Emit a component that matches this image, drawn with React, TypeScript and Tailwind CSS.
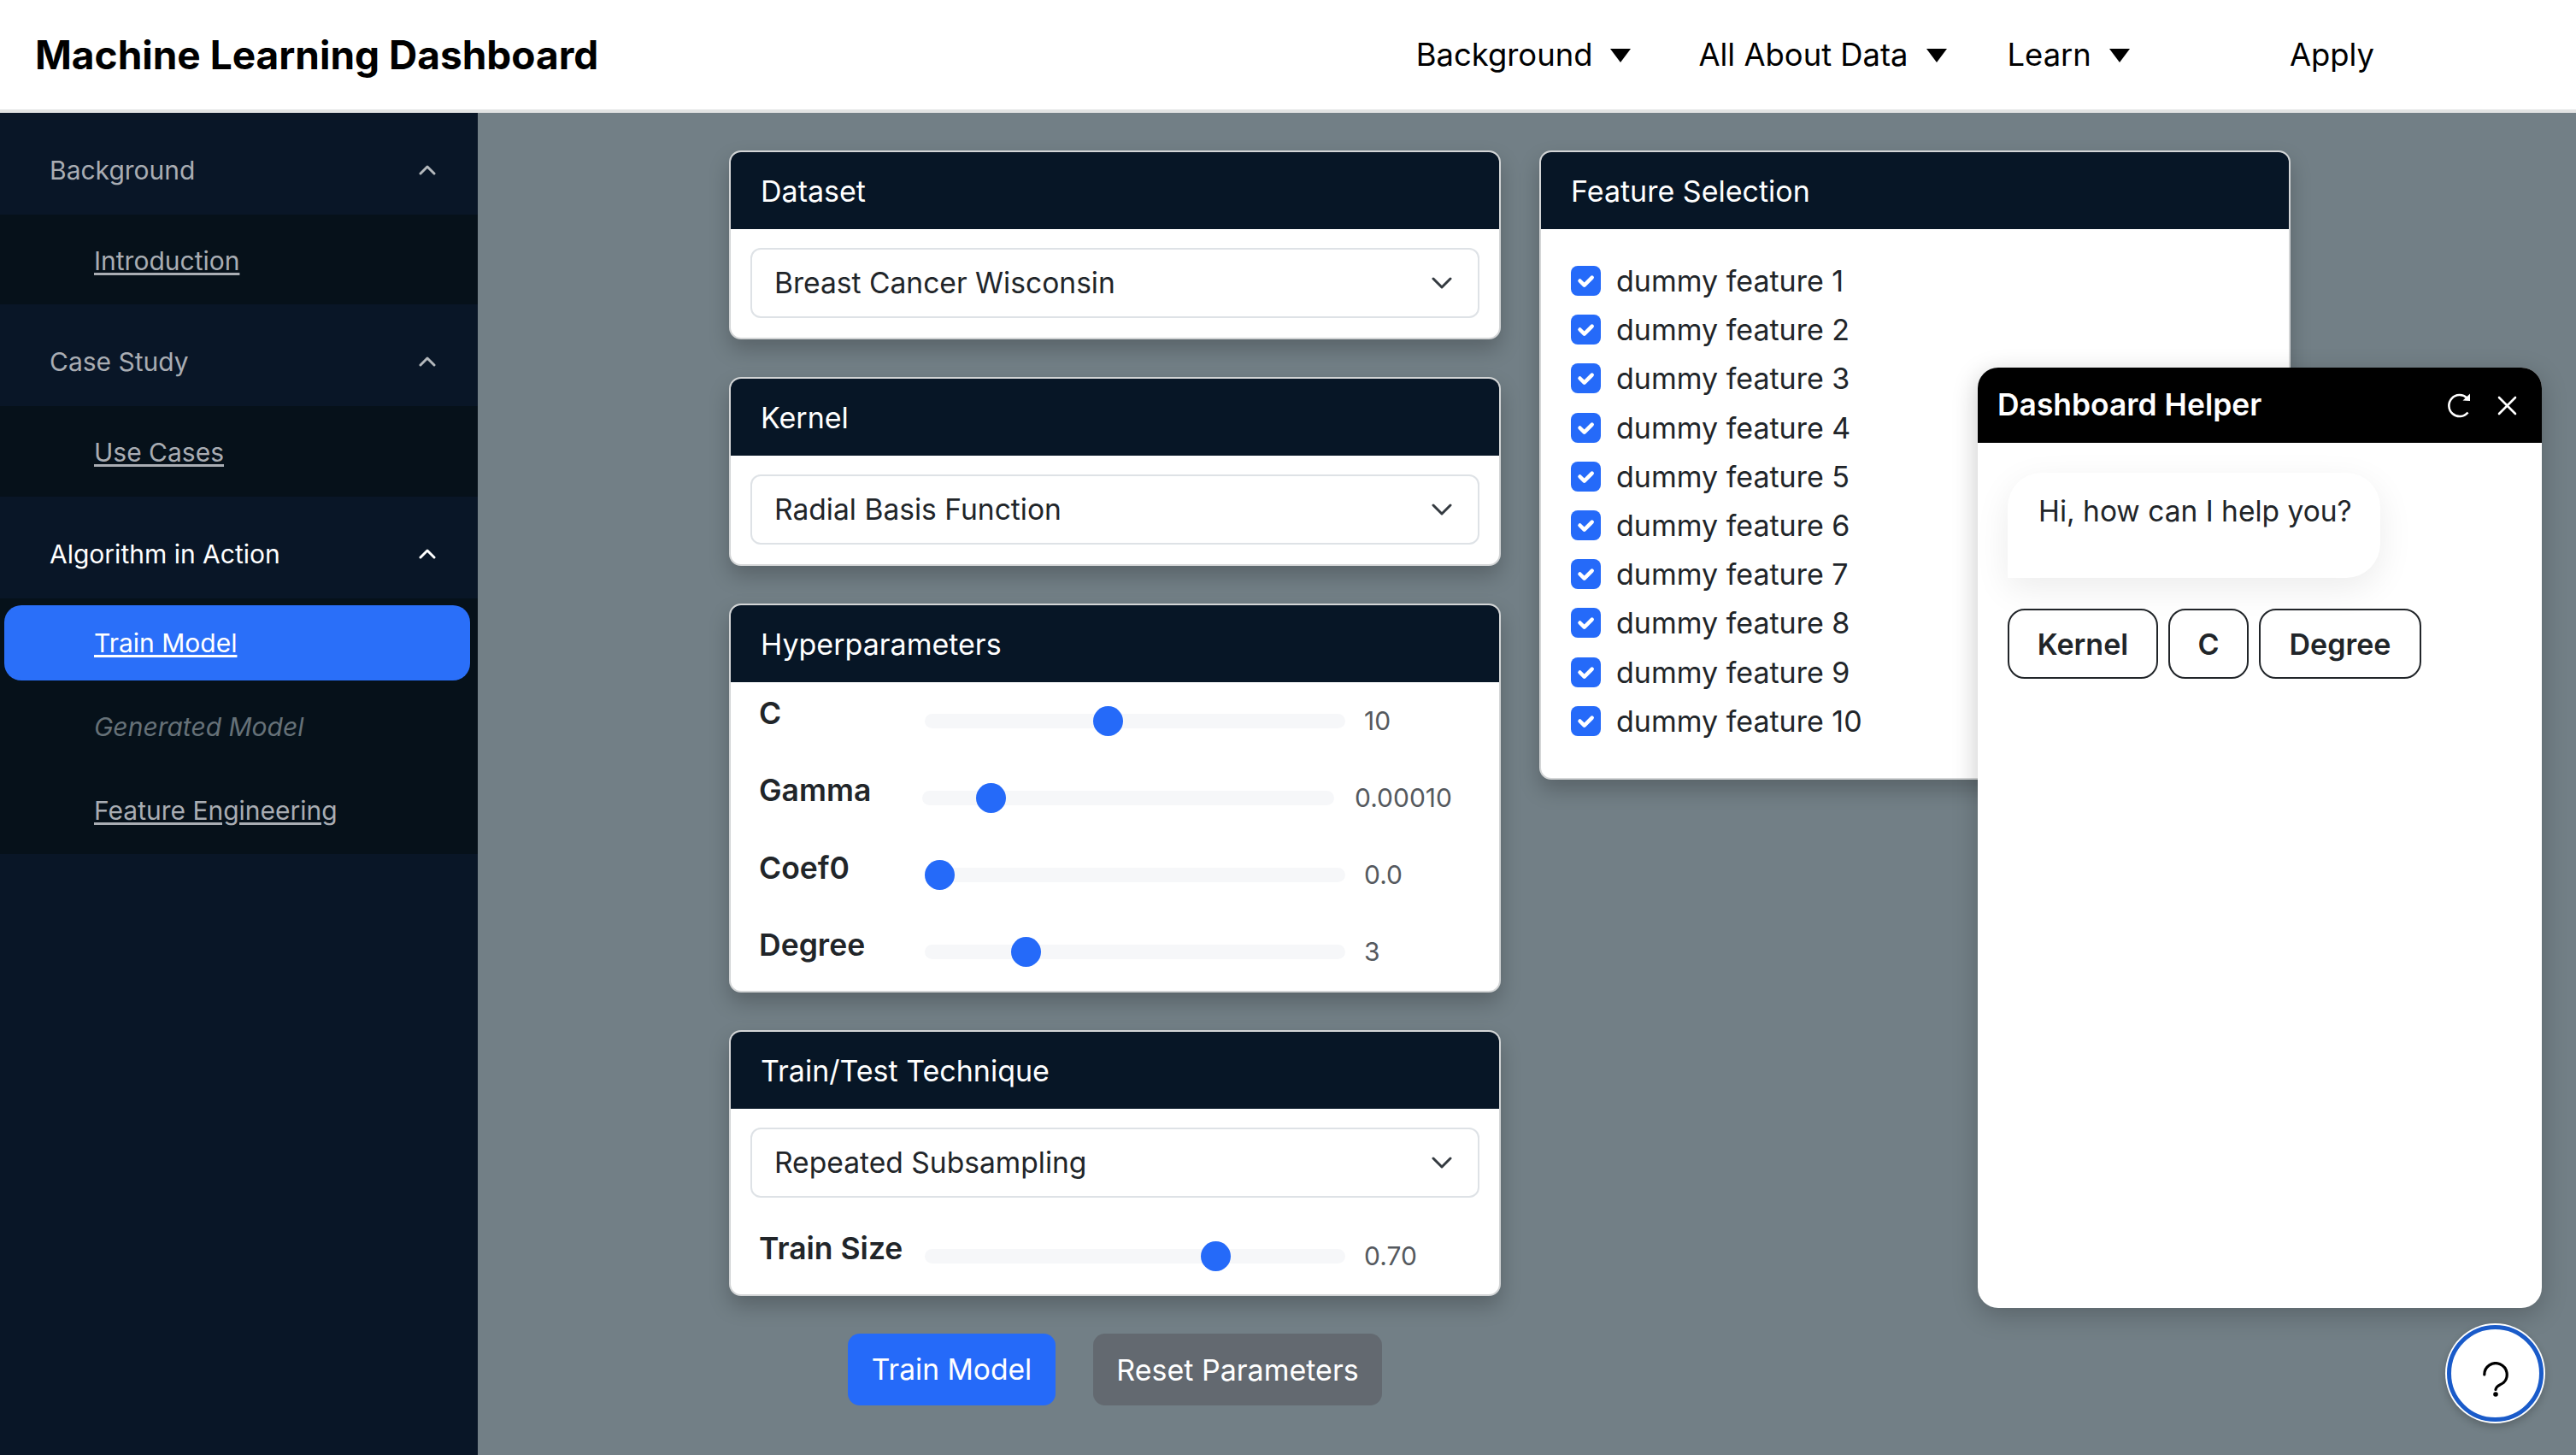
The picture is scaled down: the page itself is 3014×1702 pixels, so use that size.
const features = Array.from({ length: 10 }, (_, i) => `dummy feature ${i + 1}`);

const hyperparameters = [
  { label: 'C', value: '10', pos: 0.43, gamma: false },
  { label: 'Gamma', value: '0.00010', pos: 0.142, gamma: true },
  { label: 'Coef0', value: '0.0', pos: 0, gamma: false },
  { label: 'Degree', value: '3', pos: 0.222, gamma: false },
];

const helperButtons = [
  { label: 'Kernel', cls: 'w-[176px]' },
  { label: 'C', cls: 'w-[94px]' },
  { label: 'Degree', cls: 'w-[190px]' },
];

function Caret() {
  return (
    <svg width="24" height="16" viewBox="0 0 24 16" className="ml-[21px] mt-[2px]">
      <polygon points="0,0 24,0 12,16" fill="#000" />
    </svg>
  );
}

function ChevronUp({ color }: { color: string }) {
  return (
    <svg width="20" height="12" viewBox="0 0 20 12" fill="none" stroke={color} strokeWidth="3" strokeLinecap="round" strokeLinejoin="round">
      <path d="M2 10l8-8 8 8" />
    </svg>
  );
}

function ChevronDown() {
  return (
    <svg width="24" height="14" viewBox="0 0 24 14" fill="none" stroke="#343a40" strokeWidth="3" strokeLinecap="round" strokeLinejoin="round">
      <path d="M2 2l10 10 10-10" />
    </svg>
  );
}

function SideSection({ title, active, children }: { title: string; active?: boolean; children: React.ReactNode }) {
  return (
    <div>
      <div className={`h-[119px] pt-[15px] flex items-center justify-between pl-[58px] pr-[49px] text-[30px] ${active ? 'text-white' : 'text-[#a9adb3]'}`}>
        <span>{title}</span>
        <ChevronUp color={active ? '#ffffff' : '#b4b8bc'} />
      </div>
      <div className="bg-[#06111a]">{children}</div>
    </div>
  );
}

function Card({ title, children }: { title: string; children: React.ReactNode }) {
  return (
    <div className="rounded-[14px] border-2 border-[#d3d5d6] bg-white shadow-[0_12px_24px_rgba(0,0,0,0.22)] overflow-hidden">
      <div className="h-[90px] bg-[#071626] flex items-center pl-[35px] text-[34px] text-white">{title}</div>
      {children}
    </div>
  );
}

function Select({ value }: { value: string }) {
  return (
    <div className="h-[82px] rounded-[12px] border-2 border-[#dee2e6] flex items-center justify-between pl-[26px] pr-[30px] text-[33.6px] text-[#212529]">
      <span>{value}</span>
      <ChevronDown />
    </div>
  );
}

function Slider({ label, value, pos, narrow }: { label: string; value: string; pos: number; narrow?: boolean }) {
  return (
    <div className="h-[90.25px] flex items-center pl-[33px]">
      <div className={`${narrow ? 'w-[191px]' : 'w-[194px]'} mb-[17px] text-[35.5px] font-semibold text-[#212529] whitespace-nowrap`}>{label}</div>
      <div className={`${narrow ? 'w-[482px]' : 'w-[492px]'} relative h-[17px] rounded-full bg-[#f6f7f9]`}>
        <div
          className="absolute top-[-9px] w-[35px] h-[35px] rounded-full bg-[#256af9]"
          style={{ left: `${pos * 100}%`, marginLeft: `${-pos * 35}px` }}
        />
      </div>
      <div className={`${narrow ? 'ml-[24px]' : 'ml-[22px]'} text-[30px] text-[#55595e]`}>{value}</div>
    </div>
  );
}

export default function App() {
  return (
    <div className="relative h-[1702px] overflow-hidden bg-[#727f86] font-['Inter',sans-serif]">
      {/* Top bar */}
      <div className="h-[132px] bg-white border-b-4 border-[#e2e3e3] flex items-center pl-[41px] text-black">
        <div className="text-[46px] font-bold">Machine Learning Dashboard</div>
        <nav className="ml-auto mr-[236px] flex items-center text-[36.4px]">
          <span>Background</span>
          <Caret />
          <span className="ml-[79px]">All About Data</span>
          <Caret />
          <span className="ml-[71px]">Learn</span>
          <Caret />
          <span className="ml-[187px]">Apply</span>
        </nav>
      </div>

      <div className="flex h-[1570px]">
        {/* Sidebar */}
        <aside className="w-[559px] shrink-0 bg-[#091627]">
          <SideSection title="Background">
            <div className="h-[105px] pt-[4px] flex items-center pl-[110px] text-[30px] text-[#a9adb3] underline underline-offset-[3px]">Introduction</div>
          </SideSection>
          <SideSection title="Case Study">
            <div className="h-[106px] pt-[2px] flex items-center pl-[110px] text-[30px] text-[#a9adb3] underline underline-offset-[3px]">Use Cases</div>
          </SideSection>
          <SideSection title="Algorithm in Action" active>
            <div className="pt-[8px] pb-[2px]">
              <div className="ml-[5px] mr-[9px] h-[88px] rounded-[20px] bg-[#2a6ff9] flex items-center pl-[105px] text-[30px] text-white underline underline-offset-[3px]">Train Model</div>
              <div className="mt-[5px] h-[98px] flex items-center pl-[110px] text-[30px] italic text-[#667178]">Generated Model</div>
              <div className="h-[98px] flex items-center pl-[110px] text-[30px] text-[#a9adb3] underline underline-offset-[3px]">Feature Engineering</div>
            </div>
          </SideSection>
        </aside>

        {/* Main */}
        <main className="flex-1 pl-[294px] pt-[44px] flex items-start gap-[45px]">
          <div className="w-[903px] flex flex-col gap-[44px]">
            <Card title="Dataset">
              <div className="px-[23px] pt-[22px] pb-[23px]"><Select value="Breast Cancer Wisconsin" /></div>
            </Card>
            <Card title="Kernel">
              <div className="px-[23px] pt-[22px] pb-[23px]"><Select value="Radial Basis Function" /></div>
            </Card>
            <Card title="Hyperparameters">
              {hyperparameters.map((p) => (
                <Slider key={p.label} label={p.label} value={p.value} pos={p.pos} narrow={p.gamma} />
              ))}
            </Card>
            <Card title="Train/Test Technique">
              <div className="px-[23px] pt-[22px]"><Select value="Repeated Subsampling" /></div>
              <div className="h-[113px] pt-[23px]">
                <Slider label="Train Size" value="0.70" pos={0.706} />
              </div>
            </Card>
            <div className="flex justify-center gap-[44px]">
              <button className="w-[243px] h-[84px] rounded-[14px] bg-[#256af9] text-[33.6px] text-white">Train Model</button>
              <button className="w-[338px] h-[84px] rounded-[14px] bg-[#636970] text-[34px] text-white">Reset Parameters</button>
            </div>
          </div>

          <div className="w-[879px]">
            <Card title="Feature Selection">
              <div className="pl-[35px] pt-[43px] pb-[49px] flex flex-col gap-[22.2px]">
                {features.map((f) => (
                  <label key={f} className="flex items-center gap-[18px] h-[35px] text-[34px] text-[#212529]">
                    <svg width="35" height="35" viewBox="0 0 35 35">
                      <rect width="35" height="35" rx="8" fill="#256af9" />
                      <path d="M10.5 17.5l5.2 5.2 9-9" fill="none" stroke="#fff" strokeWidth="4.5" strokeLinecap="round" strokeLinejoin="round" />
                    </svg>
                    <span>{f}</span>
                  </label>
                ))}
              </div>
            </Card>
          </div>
        </main>
      </div>

      {/* Chat widget */}
      <div className="absolute left-[2314px] top-[430px] w-[660px] h-[1100px] rounded-[24px] bg-white shadow-[0_8px_30px_rgba(0,0,0,0.22)] overflow-hidden">
        <div className="h-[88px] bg-black flex items-center justify-between pl-[23px] pr-[29px] text-white">
          <span className="text-[35.4px] font-semibold">Dashboard Helper</span>
          <div className="flex items-center gap-[29px]">
            <svg width="30" height="30" viewBox="0 0 30 30" fill="none" stroke="#fff" strokeWidth="2.6">
              <path d="M23.5 6.5A12.5 12.5 0 1 0 24.5 23.5" />
              <polygon points="27,1.5 27,10 18.5,9.5" fill="#fff" stroke="none" />
            </svg>
            <svg width="23" height="23" viewBox="0 0 23 23" fill="none" stroke="#fff" strokeWidth="2.6" strokeLinecap="round">
              <path d="M2 2l19 19M21 2L2 21" />
            </svg>
          </div>
        </div>
        <div className="px-[35px] pt-[35px]">
          <div className="w-[436px] h-[123px] rounded-[40px] rounded-bl-none pl-[36px] pt-[20px] bg-white text-[33.5px] text-[#212529] shadow-[0_12px_40px_rgba(0,0,0,0.08)]">Hi, how can I help you?</div>
          <div className="mt-[36px] flex gap-[12px]">
            {helperButtons.map((b) => (
              <button key={b.label} className={`${b.cls} h-[82px] rounded-[20px] border-2 border-[#212529] text-[34px] font-semibold text-[#212529]`}>{b.label}</button>
            ))}
          </div>
        </div>
      </div>

      {/* Help button */}
      <div className="absolute left-[2861px] top-[1548px] w-[117px] h-[117px] rounded-full bg-white p-[2px] shadow-[0_4px_10px_rgba(0,0,0,0.2)]">
        <div className="w-[113px] h-[113px] rounded-full border-[5px] border-[#1a5bc9] flex items-center justify-center pt-[14px]">
          <svg width="30" height="41" viewBox="0 0 30 41" fill="none" stroke="#000" strokeWidth="3.2" strokeLinecap="round">
            <path d="M1.8 15A13.2 13.2 0 1 1 24 24.5C19.5 27.5 15.5 28 15 32.5" />
            <circle cx="15" cy="38" r="2.8" fill="#000" stroke="none" />
          </svg>
        </div>
      </div>
    </div>
  );
}
